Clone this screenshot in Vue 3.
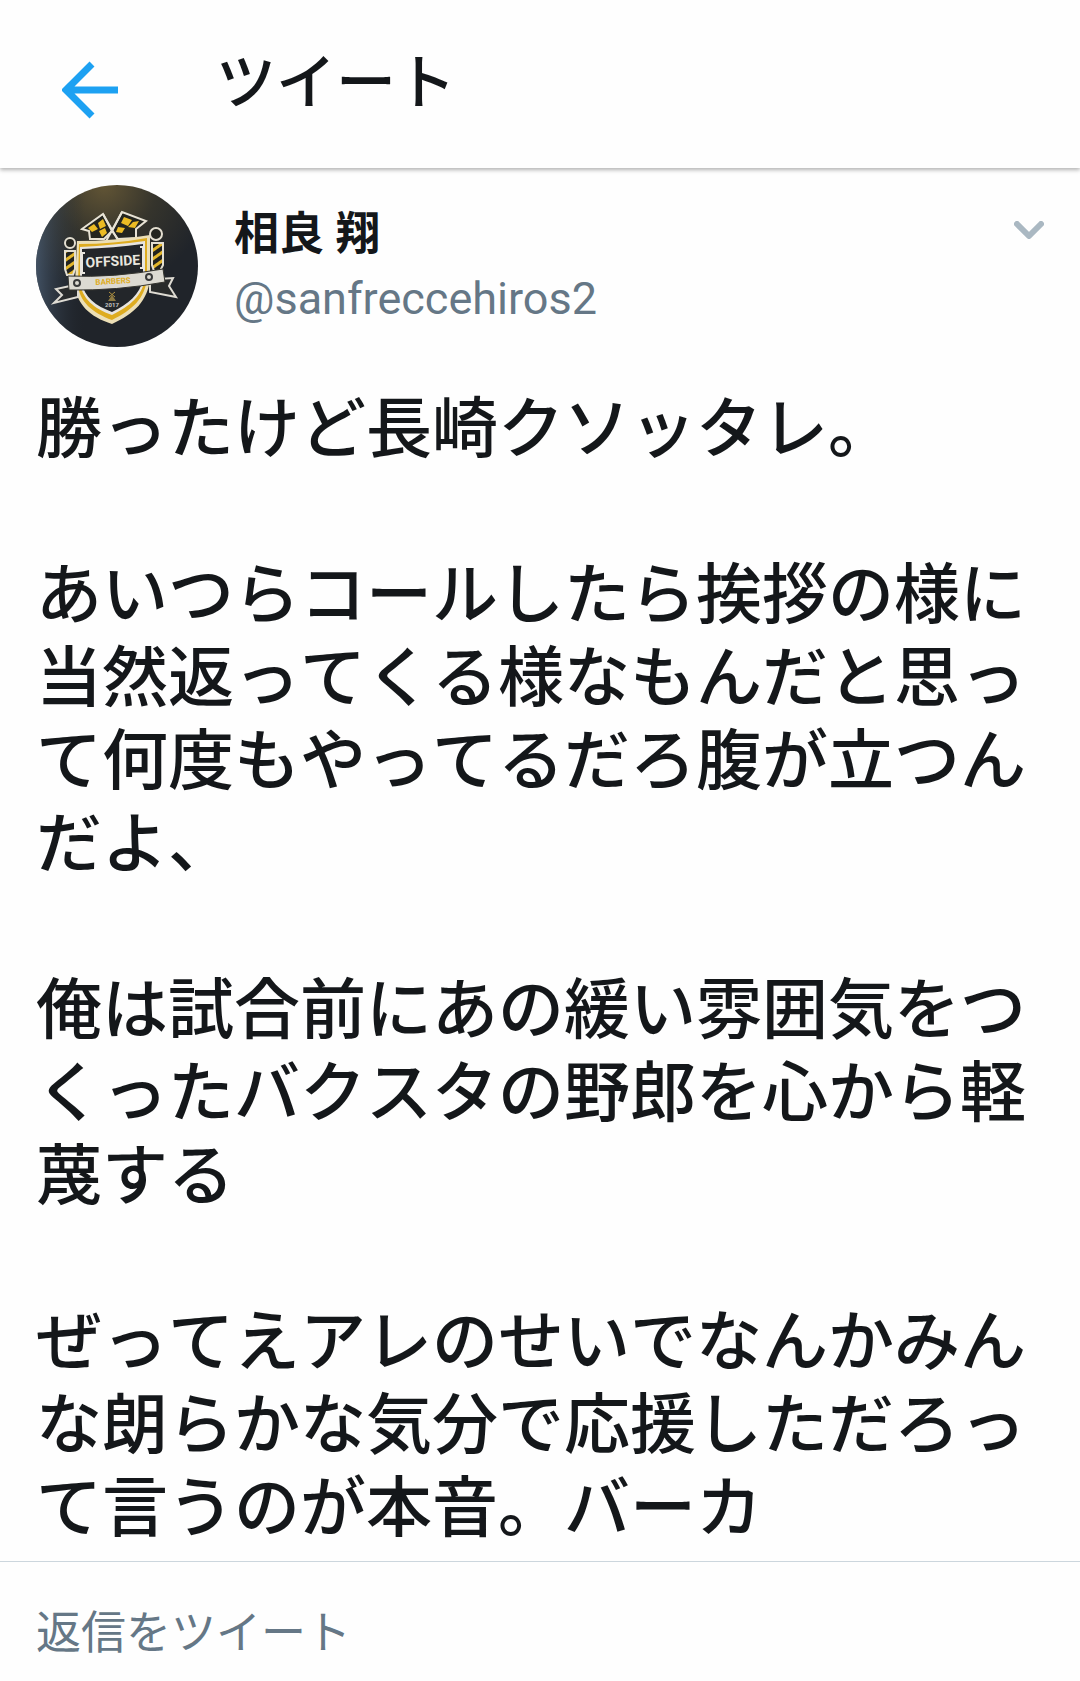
<script setup>
import { ref } from 'vue';

const user = { name: '相良 翔', handle: 'sanfreccehiros2' };
const reply = ref('');

const tweet = [
  '勝ったけど長崎クソッタレ。',
  'あいつらコールしたら挨拶の様に当然返ってくる様なもんだと思って何度もやってるだろ腹が立つんだよ、',
  '俺は試合前にあの緩い雰囲気をつくったバクスタの野郎を心から軽蔑する',
  'ぜってえアレのせいでなんかみんな朗らかな気分で応援しただろって言うのが本音。バーカ',
];
</script>

<template>
  <div class="page" lang="ja">
    <header class="topbar">
      <button class="back" type="button" aria-label="戻る">
        <svg width="56" height="58" viewBox="0 0 56 58">
          <path d="M30 3 L4 29 L30 55 M5 29 H56" fill="none" stroke="#1da1f2" stroke-width="7" />
        </svg>
      </button>
      <h1 class="title">ツイート</h1>
    </header>

    <main class="tweet">
      <div class="author">
        <svg class="avatar" viewBox="0 0 162 162" role="img" aria-label="OFFSIDE">
          <defs>
            <radialGradient id="glow" cx="0.42" cy="0" r="0.65">
              <stop offset="0" stop-color="#625535" />
              <stop offset="0.5" stop-color="#35342c" />
              <stop offset="1" stop-color="#20242a" />
            </radialGradient>
            <linearGradient id="side" x1="0" y1="0" x2="1" y2="0">
              <stop offset="0" stop-color="#50647b" stop-opacity="0.7" />
              <stop offset="0.3" stop-color="#222932" stop-opacity="0" />
            </linearGradient>
            <pattern id="stripes" width="7" height="7" patternUnits="userSpaceOnUse" patternTransform="rotate(-35)">
              <rect width="7" height="7" fill="#22231f" />
              <rect width="7" height="3" fill="#e3b62b" />
            </pattern>
          </defs>
          <circle cx="81" cy="81" r="81" fill="url(#glow)" />
          <circle cx="81" cy="81" r="81" fill="url(#side)" />

          <!-- flags -->
          <g stroke="#e8e3d5" stroke-width="2" fill="#24251f">
            <path d="M46 44 L67 29 L76 46 L68 54 H54 L53 46 Z" />
            <path d="M76 46 L86 27 L110 36 L100 44 V53 L82 54 Z" />
            <path d="M67 29 L83 57 M86 27 L69 58" />
          </g>
          <g fill="#ebbb24">
            <path d="M52 43 L58 39 L62 44 L56 47 Z M62 38 L67 34 L70 41 L64 44 Z M63 46 L69 43 L71 48 L66 52 Z" />
            <path d="M88 32 L96 35 L92 41 L85 38 Z M97 37 L103 36 L99 43 L92 42 Z M82 42 L89 43 L86 48 L80 47 Z" />
          </g>

          <!-- shield -->
          <path d="M41 56 Q78 56 114 50 V93 C112 116 98 129 76 139 C54 132 40 119 39 99 Z" fill="#ecdfb6" />
          <path d="M43 59 Q78 59 111 53 V93 C109 114 96 125 76 135 C57 128 43 117 42 99 Z" fill="#deac20" />
          <path d="M44 62 Q78 60 109 56 V94 C106 111 94 121 76 130 C58 124 46 113 44 98 Z" fill="#e8e5df" />
          <path d="M46 64 Q78 63 107 59 V94 C104 110 92 119 76 127 C60 121 48 112 46 98 Z" fill="#23262a" />

          <!-- barber poles -->
          <g stroke="#e4dfd1" stroke-width="2">
            <circle cx="34" cy="58" r="5" fill="#24251f" />
            <path d="M29 66 H39 V84 L37 90 H31 L29 84 Z" fill="url(#stripes)" />
            <circle cx="120" cy="49" r="6" fill="#24251f" />
            <path d="M116 58 H127 V80 L124 86 H118 L116 80 Z" fill="url(#stripes)" />
          </g>
          <path d="M49 68 H46 V88 H49 M104 62 H107 V83 H104" fill="none" stroke="#e9e6df" stroke-width="2" />
          <text class="brand" x="77" y="81" text-anchor="middle" transform="rotate(-3 77 78)">OFFSIDE</text>

          <!-- ribbon -->
          <g fill="#292b2b" stroke="#dedbd3" stroke-width="2">
            <path d="M34 101 L20 104 L26 110 L18 118 L42 112 V104 Z" />
            <path d="M122 94 L137 93 L133 101 L140 112 L114 107 V98 Z" />
          </g>
          <path d="M32 91 Q77 93 127 84 L129 97 Q80 106 33 105 Z" fill="#dcdad2" stroke="#34342f" />
          <circle cx="41" cy="98" r="3" fill="none" stroke="#393a3a" stroke-width="2" />
          <circle cx="113" cy="92" r="3" fill="none" stroke="#393a3a" stroke-width="2" />
          <text class="trade" x="77" y="99" text-anchor="middle" transform="rotate(-3 77 96)">BARBERS</text>

          <path d="M73 107 L79 112 M79 107 L73 112" stroke="#b29340" stroke-width="1" />
          <path d="M72 116 L76 110 L80 116 Z" fill="#8e7a43" />
          <text class="year" x="76" y="122" text-anchor="middle">2017</text>
        </svg>
        <div class="names">
          <strong class="name">{{ user.name }}</strong>
          <span class="handle">@{{ user.handle }}</span>
        </div>
        <button class="more" type="button" aria-label="その他">
          <svg width="30" height="18" viewBox="0 0 30 18">
            <path d="M3 3 L15 15 L27 3" fill="none" stroke="#aab8c2" stroke-width="6" stroke-linecap="round" stroke-linejoin="round" />
          </svg>
        </button>
      </div>

      <div class="text">
        <p v-for="(line, i) in tweet" :key="i">{{ line }}</p>
      </div>
    </main>

    <footer class="reply">
      <input v-model="reply" type="text" placeholder="返信をツイート" aria-label="返信をツイート" />
    </footer>
  </div>
</template>

<style>
body {
  margin: 0;
  background: #fefefe;
}
</style>

<style scoped>
.page {
  font-family: Roboto, "Noto Sans CJK JP", sans-serif;
  color: #14171a;
  background: #fefefe;
}

button {
  display: flex;
  padding: 0;
  border: none;
  background: none;
  cursor: pointer;
}

.topbar {
  display: flex;
  align-items: center;
  padding: 44px 62px;
  box-shadow: 0 2px 4px rgba(0, 0, 0, 0.3);
}

.back {
  padding-top: 12px;
}

.title {
  margin: 0 0 0 98px;
  font-size: 60px;
  line-height: 80px;
  font-weight: 500;
  font-kerning: none;
}

.tweet {
  padding: 17px 36px 11px;
}

.author {
  display: flex;
  align-items: flex-start;
}

.avatar {
  flex: none;
  width: 162px;
  height: 162px;
}

.brand {
  font-size: 14px;
  font-weight: 700;
  fill: #e9e6df;
}

.trade {
  font-size: 8px;
  font-weight: 700;
  fill: #dfad24;
}

.year {
  font-size: 6px;
  font-weight: 700;
  fill: #c5c5c1;
}

.names {
  display: flex;
  flex: 1;
  flex-direction: column;
  padding: 18px 0 0 36px;
}

.name {
  font-size: 45px;
  line-height: 64px;
  font-weight: 700;
}

.handle {
  font-size: 45px;
  line-height: 64px;
  color: #657786;
}

.more {
  padding-top: 36px;
}

.text {
  display: flex;
  flex-direction: column;
  gap: 83px;
  margin-top: 41px;
}

.text p {
  margin: 0;
  font-size: 66px;
  line-height: 83px;
  font-weight: 500;
  font-kerning: none;
}

.reply {
  padding: 38px 36px;
  border-top: 1px solid #ccd6dd;
}

.reply input {
  box-sizing: border-box;
  width: 100%;
  height: 66px;
  padding: 0;
  border: none;
  outline: none;
  background: none;
  font-family: inherit;
  font-size: 45px;
  font-kerning: none;
  color: #14171a;
}

.reply input::placeholder {
  color: #657786;
  opacity: 1;
}
</style>
